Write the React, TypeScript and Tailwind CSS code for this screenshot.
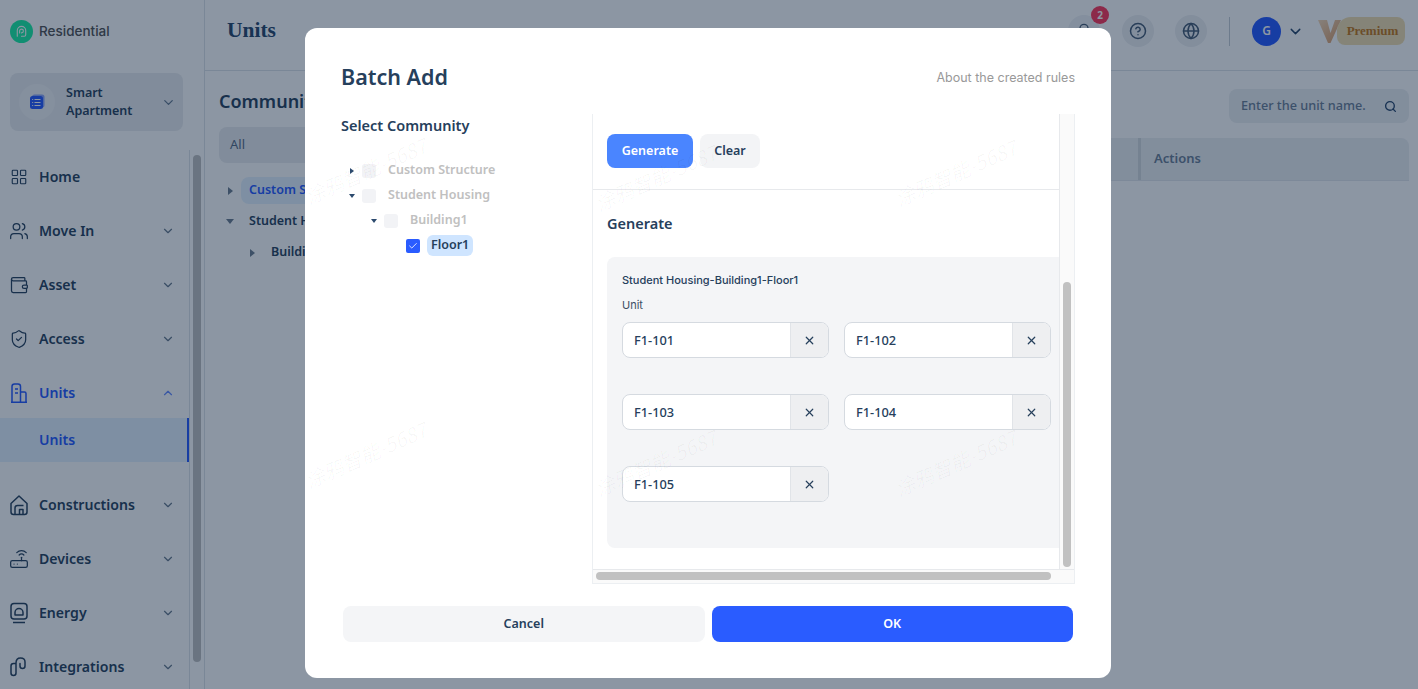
import { Bell, ChevronDown, ChevronUp, CircleHelp, Globe, LayoutGrid, Search, ShieldCheck, Users, Wallet, X, Check, Router } from "lucide-react";

const sans = "font-['Noto_Sans',sans-serif]";

function BuildingIcon() {
  return (
    <svg width="24" height="24" viewBox="0 0 24 24" fill="none" stroke="currentColor" strokeWidth="1.5" strokeLinejoin="round">
      <path d="M5 21V5.500C5 4 6 3 7.500 3H11c1.500 0 2.500 1 2.500 2.500V21M13.500 11h4c1 0 1.500.7 1.500 1.500V21M4 21.300h16M8 8h3M8 12h3" />
    </svg>
  );
}

function HouseIcon() {
  return (
    <svg width="24" height="24" viewBox="0 0 24 24" fill="none" stroke="currentColor" strokeWidth="1.5" strokeLinejoin="round">
      <path d="M4 10.500 12 3l8 7.500V19c0 1.500-1 2.500-2.500 2.500h-11C5 21.500 4 20.500 4 19v-8.500Z" />
      <path d="M8 21v-6c0-1.500 1-2.500 2.500-2.500h6M12.500 21v-4.500H16V21" />
    </svg>
  );
}

function EnergyIcon() {
  return (
    <svg width="24" height="24" viewBox="0 0 24 24" fill="none" stroke="currentColor" strokeWidth="1.5" strokeLinejoin="round">
      <rect x="4" y="2.500" width="16" height="15.500" rx="3" />
      <path d="M8 14v-2.500a4 4 0 0 1 8 0V14H8ZM6 21.500h12" />
    </svg>
  );
}

function LinkIcon() {
  return (
    <svg width="24" height="24" viewBox="0 0 24 24" fill="none" stroke="currentColor" strokeWidth="1.5" strokeLinecap="round">
      <path d="M8 8.500H6.500C5 8.500 4 9.500 4 11v7c0 1.500 1 2.500 2.500 2.500S9 19.500 9 18V8c0-3 1.500-5 4.500-5S18 4.500 18 7v4c0 1.500-1 2.500-2.500 2.500S13 12.500 13 11V8.500" />
    </svg>
  );
}

function LogoIcon() {
  return (
    <div className="flex h-[23px] w-[23px] items-center justify-center rounded-full bg-[#1ff0a5]">
      <svg width="15" height="15" viewBox="0 0 16 16" fill="none" stroke="white" strokeWidth="1.200" strokeLinecap="round">
        <path d="M3.500 13V7a4.500 4.500 0 0 1 9 0v4.500c0 1-.6 1.500-1.500 1.500H8" />
        <path d="M6 9.500V7.500a2 2 0 0 1 4 0 2 2 0 0 1-2 2" />
      </svg>
    </div>
  );
}

function ListIcon() {
  return (
    <svg width="16" height="16" viewBox="0 0 16 16">
      <rect x="3" y="0.500" width="12.500" height="13" rx="2.500" fill="#2a5cff" opacity="0.5" />
      <rect x="1" y="2" width="13" height="13" rx="2.500" fill="#2a5cff" />
      <path d="M5.500 5.500h6M5.500 8.500h6M5.500 11.500h6M3.200 5.500h1M3.200 8.500h1M3.200 11.500h1" stroke="white" strokeWidth="1" />
    </svg>
  );
}

function VipLogo() {
  return (
    <svg width="23" height="26" viewBox="0 0 23 26" className="ml-[14px]">
      <defs>
        <linearGradient id="vip" x1="0" y1="0" x2="1" y2="1">
          <stop offset="0" stopColor="#f6d9b8" />
          <stop offset="1" stopColor="#d99a66" />
        </linearGradient>
      </defs>
      <path d="M0 2h9l3.500 13L17 2h6L12.500 25h-2.500Z" fill="url(#vip)" />
    </svg>
  );
}

function NavItem({ icon, label, open, active }: { icon: React.ReactNode; label: string; open?: boolean; active?: boolean }) {
  return (
    <div className={`flex h-[54px] items-center pl-[7px] pr-[14px] ${active ? "text-[#2a5cff]" : "text-[#2c4560]"}`}>
      <div className="flex w-[24px] justify-center">{icon}</div>
      <span className="ml-2 flex-1 text-[14.100px] font-semibold">{label}</span>
      {label !== "Home" && (open ? <ChevronUp size={14} strokeWidth={2} className="opacity-70" /> : <ChevronDown size={14} strokeWidth={2} className="opacity-70" />)}
    </div>
  );
}

function Sidebar() {
  return (
    <aside className="flex h-full w-[205px] shrink-0 flex-col border-r border-[#dfe4ea] bg-white">
      <div className="flex items-center gap-[6px] pl-[10px] pt-[20px]">
        <LogoIcon />
        <span className="font-['Inter',sans-serif] text-[13.500px] font-medium text-[#555]">Residential</span>
      </div>
      <div className="ml-[10px] mt-[30px] flex h-[58px] w-[173px] items-center rounded-lg bg-[#ebedf0] pl-[9px] pr-[7px]">
        <div className="flex h-[36px] w-[36px] shrink-0 items-center justify-center rounded-full bg-[#f3f4f6]">
          <ListIcon />
        </div>
        <span className="ml-[11px] flex-1 text-[12.500px] font-semibold leading-[18px] text-[#2c4560]">Smart Apartment</span>
        <ChevronDown size={15} className="shrink-0 text-[#667a90]" />
      </div>
      <div className="relative mt-[19px] flex min-h-0 flex-1">
        <div className="w-[190px] overflow-hidden border-r border-[#dfe4ea]">
          <NavItem icon={<LayoutGrid size={18} strokeWidth={1.500} />} label="Home" />
          <NavItem icon={<Users size={20} strokeWidth={1.500} />} label="Move In" />
          <NavItem icon={<Wallet size={20} strokeWidth={1.500} />} label="Asset" />
          <NavItem icon={<ShieldCheck size={20} strokeWidth={1.500} />} label="Access" />
          <NavItem icon={<BuildingIcon />} label="Units" open active />
          <div className="mt-[-2px] flex h-[44px] items-center border-r-2 border-[#2a5cff] bg-[#e6f3ff] pl-[39px] text-[14.100px] font-semibold text-[#2a5cff]">Units</div>
          <div className="mt-[16px]">
            <NavItem icon={<HouseIcon />} label="Constructions" />
            <NavItem icon={<Router size={20} strokeWidth={1.500} />} label="Devices" />
            <NavItem icon={<EnergyIcon />} label="Energy" />
            <NavItem icon={<LinkIcon />} label="Integrations" />
          </div>
        </div>
        <div className="ml-[3px] mt-[5px] h-[507px] w-[8px] rounded-full bg-[#c1c1c1]" />
      </div>
    </aside>
  );
}

function CommunityTree() {
  return (
    <div className="mt-[12px] text-[12.500px] font-semibold text-[#2c4560]">
      <div className="flex h-[31px] items-center">
        <span className="ml-[9px] h-0 w-0 border-y-[4px] border-l-[5px] border-y-transparent border-l-[#6f8091]" />
        <span className="ml-[8px] flex h-[27px] items-center rounded-lg bg-[#e6f3ff] px-[8px] text-[#2a5cff]">Custom Structure</span>
      </div>
      <div className="flex h-[31px] items-center">
        <span className="ml-[7px] h-0 w-0 border-x-[4px] border-t-[5px] border-x-transparent border-t-[#6f8091]" />
        <span className="ml-[15px]">Student Housing</span>
      </div>
      <div className="flex h-[31px] items-center">
        <span className="ml-[31px] h-0 w-0 border-y-[4px] border-l-[5px] border-y-transparent border-l-[#6f8091]" />
        <span className="ml-[16px]">Building1</span>
      </div>
    </div>
  );
}

function MainBehind() {
  return (
    <main className="flex min-w-0 flex-1 flex-col bg-white">
      <header className="flex h-[71px] shrink-0 items-start border-b border-[#dfe4ea] pl-[22px] pr-[13px] pt-[14px]">
        <h1 className="font-['Liberation_Serif',serif] text-[21.500px] font-bold leading-[32px] text-[#2c4a6e]">Units</h1>
        <div className="ml-auto mt-[1px] flex items-center text-[#4a5f77]">
          <div className="relative flex h-[32px] w-[32px] items-center justify-center rounded-full bg-[#f0f2f5]">
            <Bell size={16} />
            <span className="absolute right-[-9px] top-[-9px] flex h-[18px] w-[18px] items-center justify-center rounded-full bg-[#ff3b5c] text-[10px] font-bold text-white">2</span>
          </div>
          <div className="ml-[22px] flex h-[32px] w-[32px] items-center justify-center rounded-full bg-[#eef0f3]"><CircleHelp size={18} /></div>
          <div className="ml-[21px] flex h-[32px] w-[32px] items-center justify-center rounded-full bg-[#eef0f3]"><Globe size={18} /></div>
          <div className="ml-[22px] h-[29px] w-px bg-[#c7ced6]" />
          <div className="ml-[22px] flex h-[29px] w-[29px] items-center justify-center rounded-full bg-[#2a5cff] text-[12px] font-semibold text-white">G</div>
          <ChevronDown size={17} className="ml-[6px] text-[#2c4a6e]" />
          <VipLogo />
          <span className="ml-[-4px] flex h-[28px] w-[68px] items-center justify-center rounded-[8px] rounded-tl-[14px] bg-[#f3dfb0] pl-[3px] font-['Liberation_Serif',serif] text-[13px] font-bold text-[#c47a1e]">Premium</span>
        </div>
      </header>
      <div className="flex flex-1 pl-[14px] pr-[9px]">
        <div className="w-[300px] shrink-0 pt-[16px]">
          <h2 className="text-[18px] font-semibold leading-[28px] text-[#2c4560]">Community</h2>
          <div className="mt-[12px] flex h-[36px] items-center rounded-lg bg-[#ebedf0] pl-[11px] text-[13px] text-[#5a6f87]">All</div>
          <CommunityTree />
        </div>
        <div className="flex flex-1 flex-col items-end pt-[18px]">
          <div className="flex h-[34px] w-[180px] items-center justify-between rounded-lg bg-[#edf0f3] px-[12px] text-[12.700px] font-medium text-[#6e8197]">
            Enter the unit name.
            <Search size={13} strokeWidth={2.500} className="text-[#2c4a6e]" />
          </div>
          <div className="mt-[15px] flex h-[43px] w-full rounded-t-lg border-b border-[#e4e8ec] bg-[#edf0f3]">
            <div className="ml-auto flex w-[271px] items-center border-l-[3px] border-[#d5dade] pl-[13px] text-[13px] font-semibold text-[#6e8197]">Actions</div>
          </div>
        </div>
      </div>
    </main>
  );
}

function Watermark({ className }: { className: string }) {
  return <span className={`pointer-events-none absolute -rotate-[24deg] font-['Noto_Sans_CJK_SC',sans-serif] text-[20px] italic text-[#000]/[0.03] ${className}`}>涂鸦智能-5687</span>;
}

function TreeRow({ indent, label, arrow, checked }: { indent: number; label: string; arrow?: "right" | "down"; checked?: boolean }) {
  return (
    <div className="flex h-[25px] items-center" style={{ paddingLeft: indent }}>
      <div className="flex w-[11px] justify-center">
        {arrow === "right" && <span className="h-0 w-0 border-y-[3.500px] border-l-[4px] border-y-transparent border-l-[#2c4a6e]" />}
        {arrow === "down" && <span className="h-0 w-0 border-x-[3.500px] border-t-[4px] border-x-transparent border-t-[#2c4a6e]" />}
      </div>
      {checked ? (
        <div className="ml-[5px] flex h-[14px] w-[14px] items-center justify-center rounded-[2px] bg-[#2a5cff]"><Check size={10} strokeWidth={2} className="text-white" /></div>
      ) : (
        <div className="ml-[5px] h-[14px] w-[14px] rounded-[3px] bg-[#f2f3f6]" />
      )}
      {checked ? (
        <span className="ml-[7px] flex h-[21px] items-center rounded-[6px] bg-[#cfe5ff] px-[4px] text-[12.500px] font-semibold text-[#26405c]">{label}</span>
      ) : (
        <span className="ml-[12px] text-[12.500px] font-semibold text-[#c0c0c0]">{label}</span>
      )}
    </div>
  );
}

function UnitInput({ value }: { value: string }) {
  return (
    <div className="flex h-[36px] w-[207px] overflow-hidden rounded-lg border border-[#d5dae0] bg-white">
      <div className="flex flex-1 items-center pl-[11px] pt-px text-[12.800px] font-medium text-[#26405c]">{value}</div>
      <div className="flex w-[38px] items-center justify-center border-l border-[#e1e4e8] bg-[#eeeff1]"><X size={13} strokeWidth={2.200} className="text-[#26405c]" /></div>
    </div>
  );
}

function BatchAddModal() {
  const units = ["F1-101", "F1-102", "F1-103", "F1-104", "F1-105"];
  return (
    <div className="absolute inset-0 flex items-start justify-center bg-[#001633]/45 pr-[2px]">
      <div className="relative mt-[28px] flex h-[650px] w-[806px] flex-col rounded-xl bg-white px-[36px] pb-[36px] pt-[33px]">
        <div className="flex h-[32px] items-center justify-between">
          <h2 className="text-[21.500px] font-semibold text-[#26405c]">Batch Add</h2>
          <span className="mt-[2px] font-['Inter',sans-serif] text-[12.500px] text-[#999]">About the created rules</span>
        </div>
        <div className="mt-[21px] flex h-[470px]">
          <div className="w-[251px] shrink-0">
            <h3 className="mt-[-1px] text-[14.500px] font-semibold leading-[24px] text-[#26405c]">Select Community</h3>
            <div className="mt-[21px]">
              <TreeRow indent={5} label="Custom Structure" arrow="right" />
              <TreeRow indent={5} label="Student Housing" arrow="down" />
              <TreeRow indent={27} label="Building1" arrow="down" />
              <TreeRow indent={49} label="Floor1" checked />
            </div>
          </div>
          <div className="flex h-[470px] w-[483px] flex-col border-x border-b border-[#eceff2]">
            <div className="flex min-h-0 flex-1">
              <div className="w-[467px] overflow-hidden border-r border-[#e7e9ec]">
                <div className="flex h-[76px] items-start gap-[7px] border-b border-[#e7e9ec] pl-[14px] pt-[20px]">
                  <button type="button" className="h-[34px] w-[86px] rounded-lg bg-[#4a85ff] text-[12.500px] font-semibold text-white">Generate</button>
                  <button type="button" className="h-[34px] w-[60px] rounded-lg bg-[#f3f4f6] text-[12.500px] font-semibold text-[#26405c]">Clear</button>
                </div>
                <h3 className="pl-[14px] pt-[22px] text-[14.500px] font-semibold leading-[22px] text-[#26405c]">Generate</h3>
                <div className="ml-[14px] mt-[23px] h-[291px] w-[470px] rounded-l-lg bg-[#f4f5f7] pl-[15px] pt-[16px]">
                  <p className="font-['Inter',sans-serif] text-[11px] font-medium leading-[14px] text-[#26405c]">Student Housing-Building1-Floor1</p>
                  <p className="mt-[11px] font-['Inter',sans-serif] text-[11px] leading-[14px] text-[#3c4f63]">Unit</p>
                  <div className="mt-[10px] grid grid-cols-[207px_207px] gap-x-[15px] gap-y-[36px]">
                    {units.map((u) => <UnitInput key={u} value={u} />)}
                  </div>
                </div>
              </div>
              <div className="relative flex-1 bg-[#fafafa]">
                <div className="absolute left-[3px] top-[168px] h-[285px] w-[8px] rounded-full bg-[#c1c1c1]" />
              </div>
            </div>
            <div className="h-[14px] border-t border-[#e7e9ec] bg-[#fafafa] pl-[3px] pt-[2px]">
              <div className="h-[8px] w-[455px] rounded-full bg-[#c1c1c1]" />
            </div>
          </div>
        </div>
        <div className="mt-[22px] flex gap-[7px] px-[2px]">
          <button type="button" className="h-[36px] flex-1 rounded-lg bg-[#f4f5f7] text-[12.500px] font-semibold text-[#26405c]">Cancel</button>
          <button type="button" className="h-[36px] flex-1 rounded-lg bg-[#2a5cff] text-[12.500px] font-semibold text-white">OK</button>
        </div>
        <Watermark className="left-[-5px] top-[128px]" />
        <Watermark className="left-[285px] top-[135px]" />
        <Watermark className="left-[585px] top-[130px]" />
        <Watermark className="left-[-5px] top-[412px]" />
        <Watermark className="left-[285px] top-[420px]" />
        <Watermark className="left-[585px] top-[420px]" />
      </div>
    </div>
  );
}

export default function App() {
  return (
    <div className={`relative flex h-screen w-full overflow-hidden ${sans}`}>
      <Sidebar />
      <MainBehind />
      <BatchAddModal />
    </div>
  );
}
